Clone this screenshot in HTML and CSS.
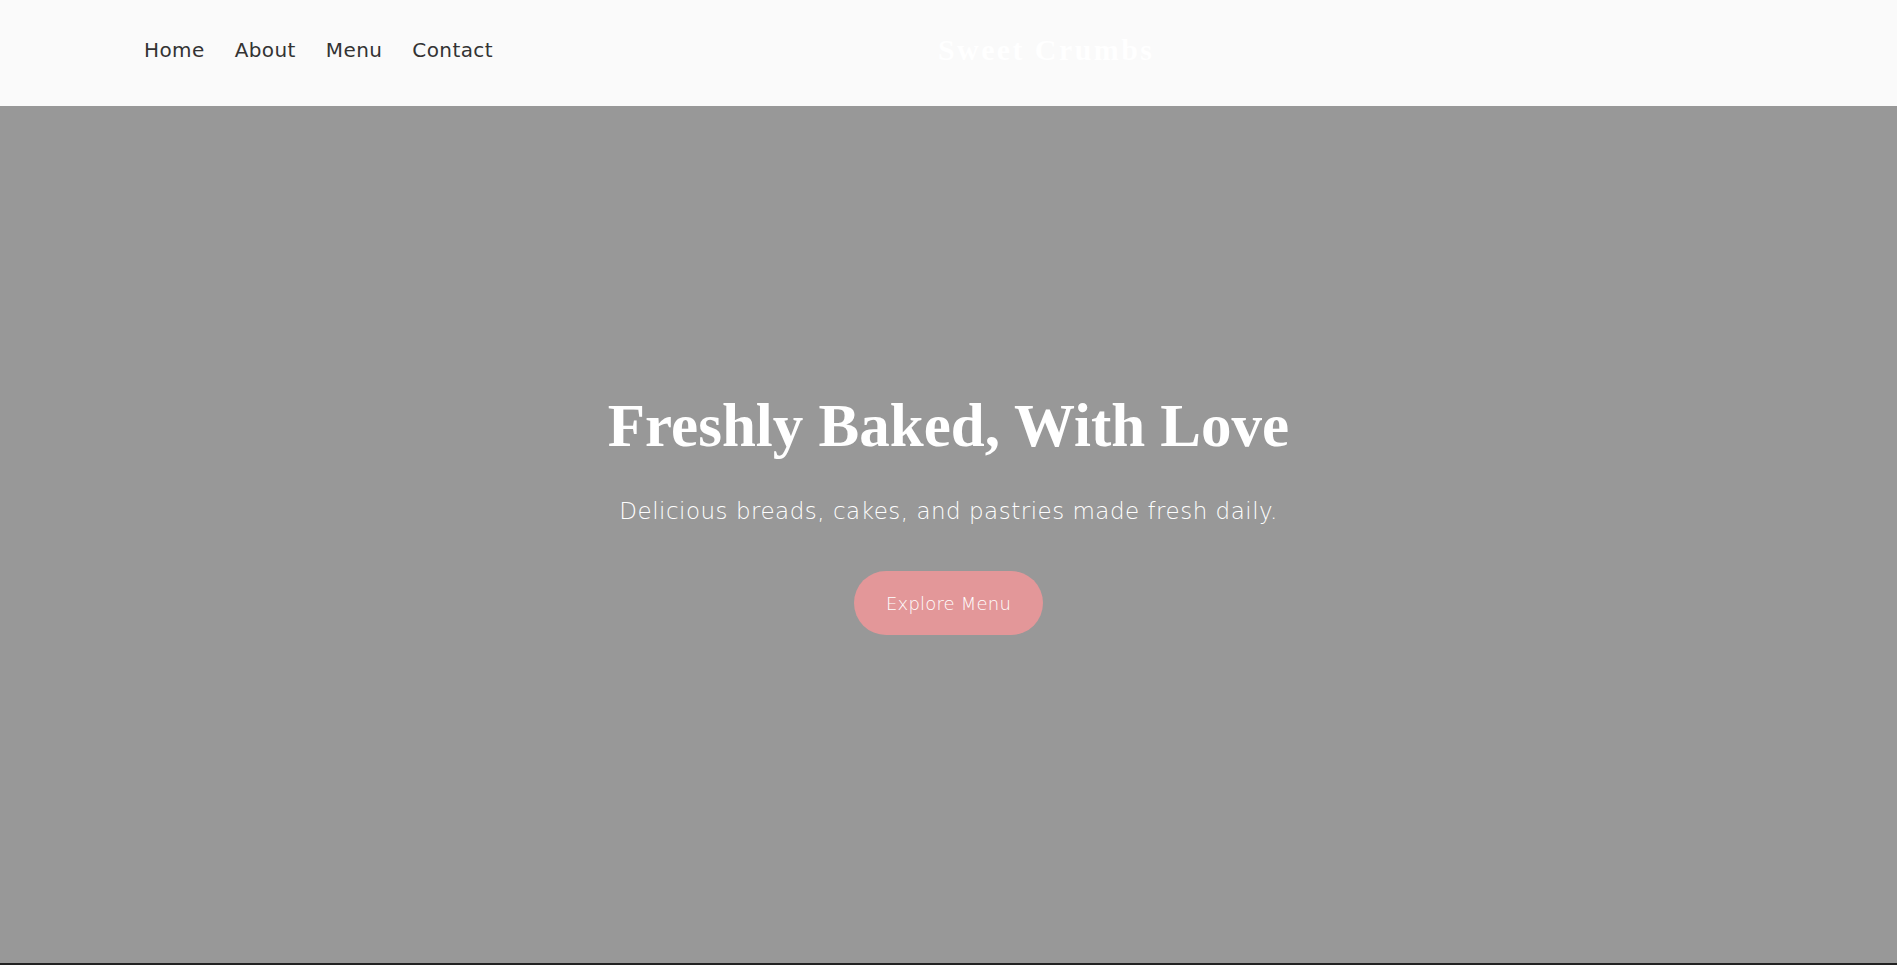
FILE: index.html
```html
<!DOCTYPE html>
<html lang="en">
<head>
<meta charset="utf-8">
<title>Sweet Crumbs</title>
<link rel="stylesheet" href="styles.css">
</head>
<body>
<header class="site-header">
  <nav class="main-nav">
    <a href="#" class="nav-link">Home</a>
    <a href="#" class="nav-link">About</a>
    <a href="#" class="nav-link">Menu</a>
    <a href="#" class="nav-link">Contact</a>
  </nav>
  <div class="logo">Sweet Crumbs</div>
</header>
<section class="hero">
  <h1 class="hero-title">Freshly Baked, With Love</h1>
  <p class="hero-text">Delicious breads, cakes, and pastries made fresh daily.</p>
  <a href="#" class="hero-btn">Explore Menu</a>
</section>
<footer class="site-footer"></footer>
</body>
</html>
```
FILE: styles.css
```css
* { box-sizing: border-box; }
html, body { margin: 0; padding: 0; }
body {
  font-family: "DejaVu Sans", "Noto Sans", sans-serif;
  background: #222222;
  overflow: hidden;
}
.site-header {
  height: 106px;
  background: #fafafa;
  display: grid;
  grid-template-columns: 794px 1fr;
  align-items: center;
  padding: 0 144px 6px 144px;
}
.main-nav {
  display: flex;
  gap: 30px;
}
.nav-link {
  font-size: 20px;
  line-height: 30px;
  letter-spacing: 0.4px;
  color: #333333;
  text-decoration: none;
  font-weight: 500;
}
.logo {
  font-family: "Liberation Serif", "Times New Roman", serif;
  font-weight: 700;
  font-size: 30px;
  letter-spacing: 2.4px;
  color: #ffffff;
}
.hero {
  height: 857px;
  background: #989898;
  display: flex;
  flex-direction: column;
  align-items: center;
  justify-content: center;
  padding-bottom: 45px;
  text-align: center;
  color: #ffffff;
}
.hero-title {
  margin: 0;
  font-family: "Liberation Serif", "Times New Roman", serif;
  font-weight: 700;
  font-size: 61px;
  line-height: 73px;
}
.hero-text {
  margin: 34px 0 0 0;
  font-size: 23px;
  line-height: 31px;
  letter-spacing: 0.5px;
  font-weight: 300;
}
.hero-btn {
  margin-top: 44px;
  height: 64px;
  padding: 0 32px;
  border-radius: 32px;
  background: #e39799;
  color: #ffffff;
  text-decoration: none;
  font-size: 18px;
  letter-spacing: 0.2px;
  font-weight: 300;
  display: flex;
  align-items: center;
}
.site-footer {
  height: 2px;
  background: #222222;
}
```
